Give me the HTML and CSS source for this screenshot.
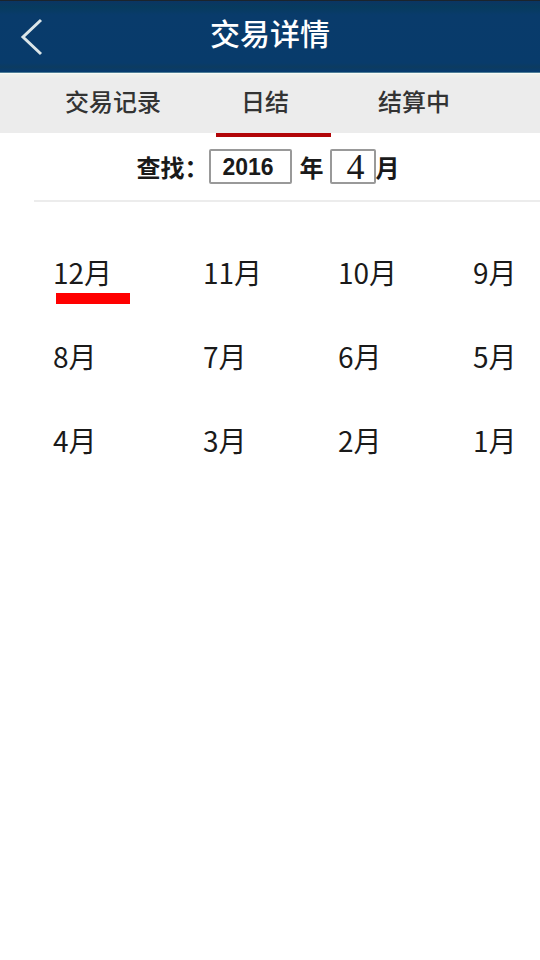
FILE: index.html
```html
<!DOCTYPE html>
<html lang="zh-CN">
<head>
<meta charset="utf-8">
<meta name="viewport" content="width=device-width, initial-scale=1">
<title>交易详情</title>
<link rel="stylesheet" href="styles.css">
</head>
<body>
<header class="header">
  <button class="back" type="button" aria-label="返回">
    <svg class="back-icon" viewBox="0 0 24 40" aria-hidden="true"><path d="M21 3 3 20 21 37"/></svg>
  </button>
  <h1 class="title">交易详情</h1>
</header>
<nav class="tabs">
  <a class="tab tab-records" href="#records">交易记录</a>
  <a class="tab tab-daily" href="#daily" aria-current="page">日结</a>
  <a class="tab tab-settling" href="#settling">结算中</a>
</nav>
<main>
  <form class="search">
    <span class="search-label">查找：</span>
    <input class="field year" id="year" type="text" value="2016">
    <label class="year-unit" for="year">年</label>
    <input class="field month" id="month" type="text" value="4">
    <label for="month">月</label>
  </form>
  <div class="months">
    <button class="month-item selected" type="button">12月</button>
    <button class="month-item" type="button">11月</button>
    <button class="month-item" type="button">10月</button>
    <button class="month-item" type="button">9月</button>
    <button class="month-item" type="button">8月</button>
    <button class="month-item" type="button">7月</button>
    <button class="month-item" type="button">6月</button>
    <button class="month-item" type="button">5月</button>
    <button class="month-item" type="button">4月</button>
    <button class="month-item" type="button">3月</button>
    <button class="month-item" type="button">2月</button>
    <button class="month-item" type="button">1月</button>
  </div>
</main>
</body>
</html>
```
FILE: styles.css
```css
* {
  box-sizing: border-box;
}

body {
  margin: 0;
  background: #fff;
  color: #1a1a1a;
  font-family: "Noto Sans CJK SC", sans-serif;
}

button,
input {
  margin: 0;
  padding: 0;
  border: 0;
  background: none;
  color: inherit;
  font: inherit;
}

.header {
  display: grid;
  grid-template-columns: 64px 1fr 64px;
  align-items: center;
  height: 73px;
  border-top: 1px solid #1b242c;
  border-bottom: 1px solid #4f7e97;
  background: linear-gradient(#0b3563, #073b5e 6px, #093b6b 14px, #083b6b 62px, #0c3b60 66px, #063b70);
}

.back {
  display: flex;
  justify-content: center;
  align-items: center;
  height: 100%;
}

.back-icon {
  width: 24px;
  height: 40px;
  fill: none;
  stroke: #dbe6e9;
  stroke-width: 3;
}

.title {
  margin: 0;
  padding-bottom: 10px;
  color: #fff;
  font-size: 30px;
  font-weight: 500;
  line-height: 44px;
  text-align: center;
}

.tabs {
  display: grid;
  grid-template-columns: 40% 115px 1fr;
  height: 60px;
  border-top: 1px solid #f8faf6;
  background: linear-gradient(#f0f2ec, #ececec 5px);
}

.tab {
  position: relative;
  padding-top: 9px;
  color: #333;
  font-size: 24px;
  font-weight: 500;
  line-height: 36px;
  text-decoration: none;
}

.tab-records {
  padding-left: 65px;
}

.tab-daily {
  padding-left: 25px;
}

.tab-daily::after {
  content: "";
  position: absolute;
  top: 100%;
  left: 0;
  width: 100%;
  height: 4px;
  background: #b20508;
}

.tab-settling {
  padding-left: 47px;
}

.search {
  display: flex;
  justify-content: center;
  align-items: center;
  height: 69px;
  margin-left: 34px;
  padding-right: 38px;
  border-bottom: 2px solid #ececec;
  font-size: 24px;
  font-weight: 700;
  line-height: 36px;
}

.field {
  height: 35px;
  border: 2px solid #999;
  border-radius: 2px;
  text-align: center;
}

.year {
  width: 83px;
  padding-right: 4px;
  font-family: "Liberation Sans", sans-serif;
  font-size: 23px;
}

.year-unit {
  margin: 0 6px 0 8px;
}

.month {
  width: 46px;
  padding-left: 6px;
  font-family: "Liberation Serif", serif;
  font-size: 36px;
  font-weight: 400;
}

.months {
  display: grid;
  grid-template-columns: 150fr 135fr 135fr 67fr;
  row-gap: 44px;
  padding: 50px 0 0 53px;
}

.month-item {
  position: relative;
  justify-self: start;
  font-size: 28px;
  line-height: 40px;
  white-space: nowrap;
}

.selected::after {
  content: "";
  position: absolute;
  top: 41px;
  left: 3px;
  width: 74px;
  height: 11px;
  background: #f00;
}
```
